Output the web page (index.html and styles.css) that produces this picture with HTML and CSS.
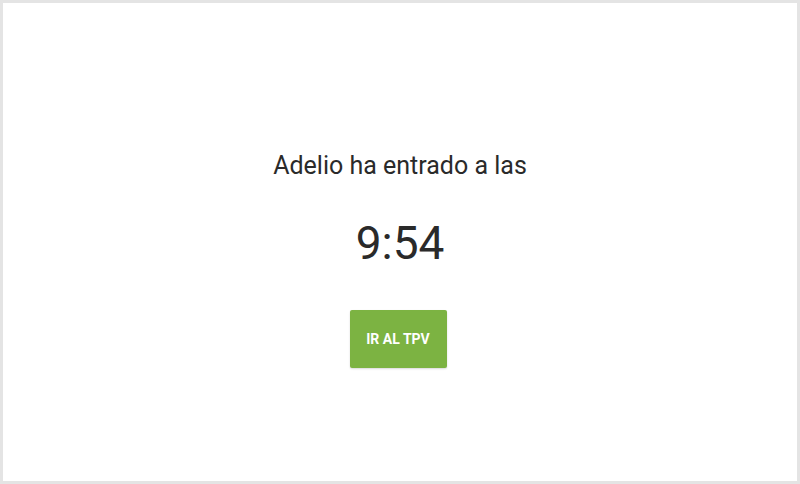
FILE: index.html
```html
<!DOCTYPE html>
<html lang="es">
<head>
<meta charset="utf-8">
<link rel="stylesheet" href="styles.css">
</head>
<body>
<main class="frame">
  <div class="content">
    <p class="message">Adelio ha entrado a las</p>
    <p class="time">9:54</p>
    <button class="btn" type="button">IR AL TPV</button>
  </div>
</main>
</body>
</html>
```
FILE: styles.css
```css
html, body {
  margin: 0;
  padding: 0;
  background: #ffffff;
}
.frame {
  box-sizing: border-box;
  width: 800px;
  height: 484px;
  border: 3px solid #e4e4e4;
  background: #ffffff;
  display: flex;
  align-items: center;
  justify-content: center;
  font-family: Roboto, "Noto Sans", sans-serif;
  color: #2a2a2a;
}
.content {
  display: flex;
  flex-direction: column;
  align-items: center;
  margin-top: 34px;
}
.message {
  margin: 0;
  font-size: 25px;
  line-height: 30px;
}
.time {
  margin: 35px 0 0;
  font-size: 46px;
  line-height: 54px;
}
.btn {
  margin-top: 40px;
  margin-right: 4px;
  width: 97px;
  height: 58px;
  padding: 0;
  border: none;
  border-radius: 2px;
  background: #7cb342;
  color: #ffffff;
  font-family: Roboto, "Noto Sans", sans-serif;
  font-weight: 700;
  font-size: 14px;
  box-shadow: 0 1px 2px rgba(0,0,0,0.15);
}
```
